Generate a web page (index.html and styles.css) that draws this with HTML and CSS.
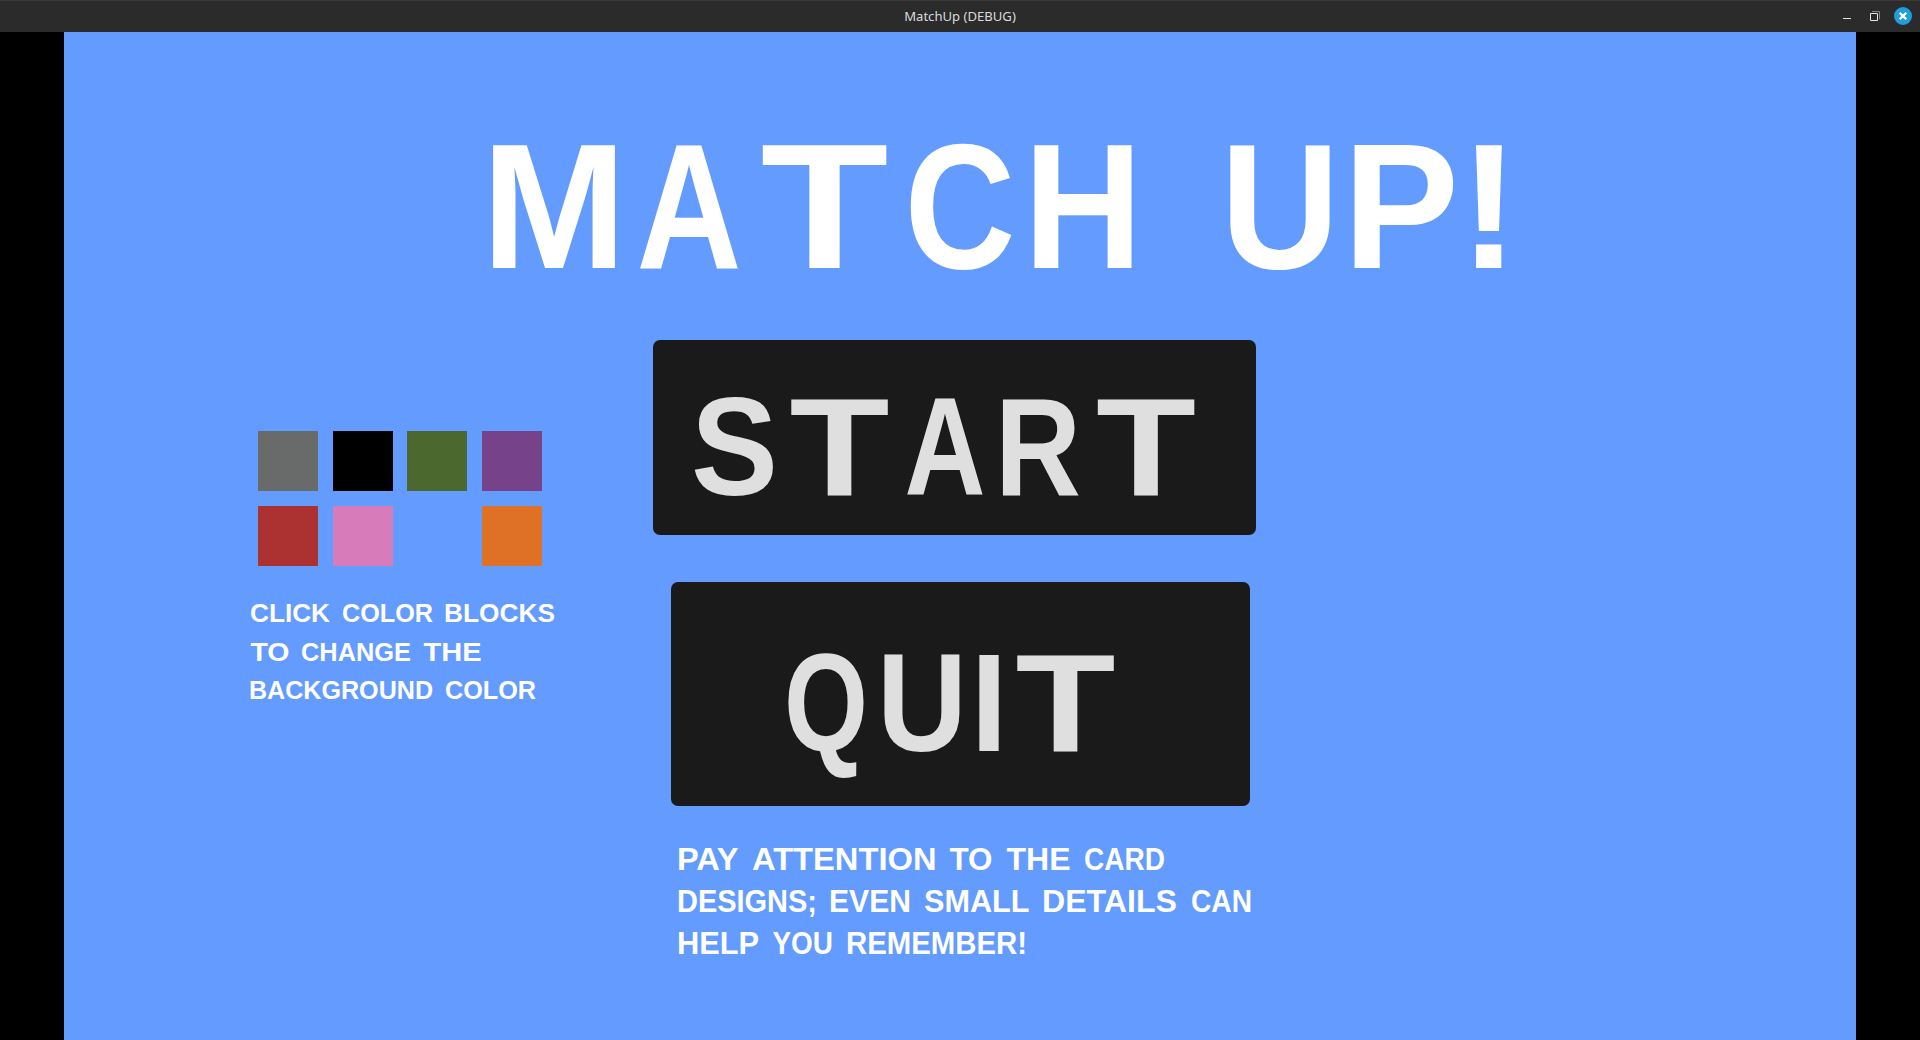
FILE: index.html
```html
<!DOCTYPE html>
<html lang="en">
<head>
<meta charset="utf-8">
<title>MatchUp (DEBUG)</title>
<link rel="stylesheet" href="styles.css">
</head>
<body>
<header class="titlebar">
  <span class="caption">MatchUp (DEBUG)</span>
  <svg class="controls" viewBox="1840 1 80 31">
    <path d="M1843 18.5h8" stroke="#dedede"/>
    <path d="M1872 11.5h7.5v8" fill="none" stroke="#858585"/>
    <path d="M1870.5 13.5h7v7h-7z" fill="none" stroke="#e4e4e4"/>
    <circle cx="1903" cy="16" r="9" fill="#1f9ede"/>
    <path d="M1899.7 12.7l6.6 6.6M1906.3 12.7l-6.6 6.6" stroke="#fff" stroke-width="2.3"/>
  </svg>
</header>
<main class="stage">
  <h1 class="title">
    <svg class="title-text" viewBox="480 140 1040 140">
      <text class="pixel" y="268"><tspan x="554" textLength="145" lengthAdjust="spacingAndGlyphs">M</tspan><tspan x="689" textLength="105" lengthAdjust="spacingAndGlyphs">A</tspan><tspan x="824.5" textLength="128" lengthAdjust="spacingAndGlyphs">T</tspan><tspan x="960" textLength="111" lengthAdjust="spacingAndGlyphs">C</tspan><tspan x="1083" textLength="119" lengthAdjust="spacingAndGlyphs">H</tspan><tspan x="1181"> </tspan><tspan x="1280" textLength="119" lengthAdjust="spacingAndGlyphs">U</tspan><tspan x="1401" textLength="116" lengthAdjust="spacingAndGlyphs">P</tspan><tspan x="1489">!</tspan></text>
    </svg>
  </h1>
  <div class="menu">
    <section class="colors">
      <div class="palette">
        <button class="swatch gray"></button>
        <button class="swatch black"></button>
        <button class="swatch green"></button>
        <button class="swatch purple"></button>
        <button class="swatch red"></button>
        <button class="swatch pink"></button>
        <button class="swatch blue"></button>
        <button class="swatch orange"></button>
      </div>
      <svg class="hint" viewBox="245 596 320 110">
        <text class="hint-text small" y="622.3"><tspan x="250" textLength="80" lengthAdjust="spacingAndGlyphs">CLICK</tspan> <tspan x="342" textLength="91" lengthAdjust="spacingAndGlyphs">COLOR</tspan> <tspan x="444" textLength="111" lengthAdjust="spacingAndGlyphs">BLOCKS</tspan></text>
        <text class="hint-text small" y="660.7"><tspan x="250.5" textLength="39" lengthAdjust="spacingAndGlyphs">TO</tspan> <tspan x="301" textLength="110" lengthAdjust="spacingAndGlyphs">CHANGE</tspan> <tspan x="423.5" textLength="58" lengthAdjust="spacingAndGlyphs">THE</tspan></text>
        <text class="hint-text small" y="699"><tspan x="249" textLength="184" lengthAdjust="spacingAndGlyphs">BACKGROUND</tspan> <tspan x="445" textLength="91" lengthAdjust="spacingAndGlyphs">COLOR</tspan></text>
      </svg>
    </section>
    <section class="actions">
      <button class="action start">
        <svg class="label" viewBox="653 340 603 195">
          <text class="pixel" y="494.5"><tspan x="734.5" textLength="87" lengthAdjust="spacingAndGlyphs">S</tspan><tspan x="839.5" textLength="100" lengthAdjust="spacingAndGlyphs">T</tspan><tspan x="945" textLength="81" lengthAdjust="spacingAndGlyphs">A</tspan><tspan x="1038" textLength="86" lengthAdjust="spacingAndGlyphs">R</tspan><tspan x="1146" textLength="100" lengthAdjust="spacingAndGlyphs">T</tspan></text>
        </svg>
      </button>
      <button class="action quit">
        <svg class="label" viewBox="670.5 582.5 579 224">
          <text class="pixel" y="751.7"><tspan x="825.5" textLength="84" lengthAdjust="spacingAndGlyphs">Q</tspan><tspan x="921.5" textLength="90" lengthAdjust="spacingAndGlyphs">U</tspan><tspan x="988.5" textLength="37" lengthAdjust="spacingAndGlyphs">I</tspan><tspan x="1065" textLength="100" lengthAdjust="spacingAndGlyphs">T</tspan></text>
        </svg>
      </button>
      <svg class="tip" viewBox="671 840 600 126">
        <text class="hint-text large" y="869.7"><tspan x="677" textLength="61" lengthAdjust="spacingAndGlyphs">PAY</tspan> <tspan x="752" textLength="184.5" lengthAdjust="spacingAndGlyphs">ATTENTION</tspan> <tspan x="949.5" textLength="43" lengthAdjust="spacingAndGlyphs">TO</tspan> <tspan x="1006.5" textLength="64" lengthAdjust="spacingAndGlyphs">THE</tspan> <tspan x="1084" textLength="81" lengthAdjust="spacingAndGlyphs">CARD</tspan></text>
        <text class="hint-text large" y="911.8"><tspan x="677" textLength="140" lengthAdjust="spacingAndGlyphs">DESIGNS;</tspan> <tspan x="829" textLength="82" lengthAdjust="spacingAndGlyphs">EVEN</tspan> <tspan x="924" textLength="105" lengthAdjust="spacingAndGlyphs">SMALL</tspan> <tspan x="1042" textLength="135" lengthAdjust="spacingAndGlyphs">DETAILS</tspan> <tspan x="1191" textLength="61" lengthAdjust="spacingAndGlyphs">CAN</tspan></text>
        <text class="hint-text large" y="953.8"><tspan x="677" textLength="81.5" lengthAdjust="spacingAndGlyphs">HELP</tspan> <tspan x="772.5" textLength="60.5" lengthAdjust="spacingAndGlyphs">YOU</tspan> <tspan x="846" textLength="181" lengthAdjust="spacingAndGlyphs">REMEMBER!</tspan></text>
      </svg>
    </section>
  </div>
</main>
</body>
</html>
```
FILE: styles.css
```css
* { box-sizing: border-box; }

body {
  margin: 0;
  height: 100vh;
  display: flex;
  flex-direction: column;
  overflow: hidden;
  background: #000;
}

svg {
  display: block;
  overflow: visible;
}

.titlebar {
  height: 32px;
  display: grid;
  grid-template-columns: 80px 1fr 80px;
  grid-template-rows: 31px;
  background: #2b2b2b;
  border-top: 1px solid #3a3a3a;
}

.caption {
  grid-column: 2;
  text-align: center;
  font: 13.1px/30px "Noto Sans", sans-serif;
  color: #dadada;
}

.controls { width: 80px; height: 31px; }

.stage {
  flex: 1;
  min-height: 0;
  width: 1792px;
  margin: 0 auto;
  padding-top: 108px;
  background: #639bff;
}

.title { margin: 0 0 60px 416px; }

.title-text {
  width: 1040px;
  height: 140px;
  font-size: 178.8px;
  fill: #fff;
}

.pixel {
  font-family: "Liberation Sans", Arial, sans-serif;
  font-weight: 700;
  text-anchor: middle;
}

.menu { display: flex; }

.colors {
  width: 408px;
  margin: 91px 0 0 181px;
}

.palette {
  display: grid;
  grid-template-columns: 60px 60px 60px 60px;
  column-gap: 14.67px;
  row-gap: 15px;
  margin-left: 13px;
}

.swatch {
  height: 60px;
  padding: 0;
  border: 0;
}

.gray { background: #696a6a; }
.black { background: #000; }
.green { background: #4b692f; }
.purple { background: #76428a; }
.red { background: #ac3232; }
.pink { background: #d77bba; }
.blue { background: #639bff; }
.orange { background: #df7126; }

.hint {
  width: 320px;
  height: 110px;
  margin-top: 30px;
}

.hint-text {
  font-family: "Liberation Sans", Arial, sans-serif;
  font-weight: 700;
  fill: #fff;
}

.small { font-size: 26.6px; }
.large { font-size: 31.4px; }

.action {
  display: block;
  padding: 0;
  border: 0;
  border-radius: 7px;
  background: #1a1a1a;
}

.start {
  width: 603px;
  height: 195px;
}

.quit {
  width: 579px;
  height: 224px;
  margin: 47.4px 0 0 17.5px;
}

.label {
  width: 100%;
  height: 100%;
  font-size: 138.8px;
  fill: #dfdfdf;
}

.tip {
  width: 600px;
  height: 126px;
  margin: 33.6px 0 0 18px;
}
```
